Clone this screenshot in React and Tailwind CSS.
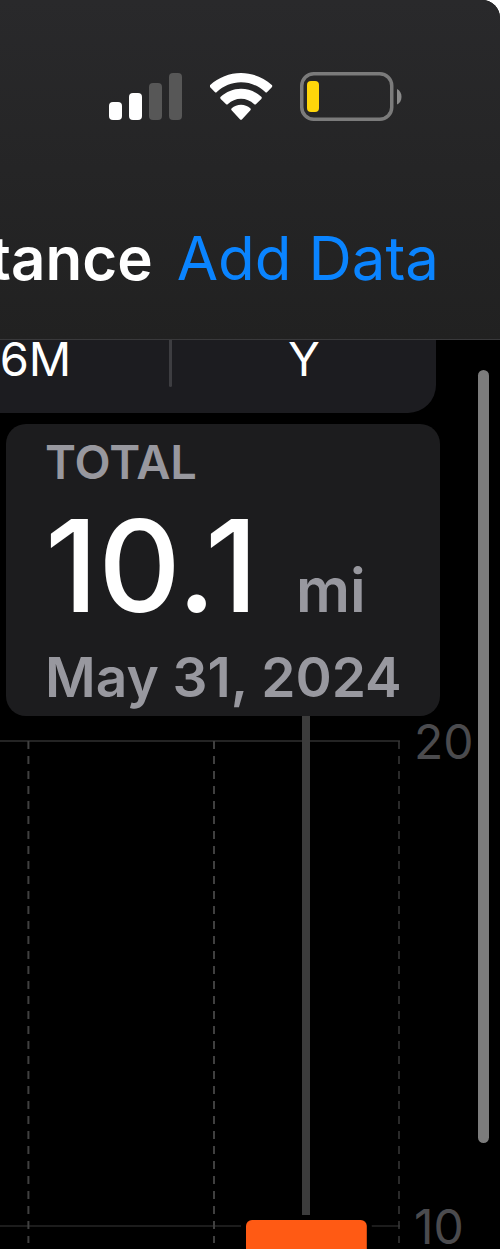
const ranges = ['6M', 'Y'];
const gridColumns = ['7.1%', '53.5%'];

const SignalIcon = () => (
  <svg width="74" height="48" viewBox="0 0 74 48" role="img" aria-label="Signal strength">
    <rect x="0" y="29" width="13" height="18" rx="4" fill="#fff" />
    <rect x="20" y="20" width="13" height="27" rx="4" fill="#fff" />
    <rect x="40" y="10" width="13" height="37" rx="4" fill="#575757" />
    <rect x="60" y="0" width="13" height="47" rx="4" fill="#575757" />
  </svg>
);

const WifiIcon = () => (
  <svg width="63" height="48" viewBox="0 0 63 48" fill="#fff" role="img" aria-label="Wi-Fi">
    <path d="M31 0C42.500 0 53.500 4.500 61.800 12q1 1 0 2.200l-4.600 4.700q-1 1-2 0C48.500 12.800 40 9.300 31 9.300S13.500 12.800 6.800 18.900q-1 1-2 0L.2 14.200q-1-1.200 0-2.200C8.500 4.500 19.500 0 31 0Z" />
    <path d="M31 15.800c7.700 0 14.800 3 20.300 8q1 1 0 2.100l-5.200 5.200q-1 1-2.100 0c-3.500-3.400-8-5.300-13-5.300s-9.500 1.900-13 5.300q-1.100 1-2.100 0l-5.200-5.200q-1-1.100 0-2.100c5.500-5 12.600-8 20.300-8Z" />
    <path d="M31 31.800c3.500 0 6.700 1.200 9.300 3.400q1.100 1 .1 2.100l-8.300 9q-1.100 1.100-2.200 0l-8.300-9q-1-1.100.1-2.100c2.600-2.200 5.800-3.400 9.300-3.400Z" />
  </svg>
);

const BatteryIcon = () => (
  <svg width="103" height="49" viewBox="0 0 103 49" role="img" aria-label="Battery low">
    <rect x="1.750" y="1.750" width="90" height="45.500" rx="12" fill="none" stroke="#7b7b7b" strokeWidth="3.500" />
    <rect x="7" y="9" width="12" height="31" rx="4" fill="#ffd60a" />
    <path d="M97 17c6 2.500 6 13 0 15.500Z" fill="#8a8a8a" />
  </svg>
);

const SummaryCard = () => (
  <section className="ml-[6px] mr-[60px] mt-[11px] rounded-[20px] bg-[#1c1c1e] pl-[39px] pr-4 pt-3 pb-[6px] font-semibold text-[#98989f]">
    <h2 className="text-[47px] leading-[52px]">TOTAL</h2>
    <p className="flex items-baseline gap-[38px] whitespace-nowrap">
      <span className="text-[128px] leading-[156px] font-medium text-white">10.1</span>
      <span className="text-[60px] leading-none">mi</span>
    </p>
    <p className="whitespace-nowrap text-[55px] leading-[66px]">May 31, 2024</p>
  </section>
);

const DistanceChart = () => (
  <section className="flex h-[533px]">
    <div className="min-w-0 flex-1">
      <svg width="100%" height="533" role="img" aria-label="Distance per day">
        <line x1="0" y1="25" x2="100%" y2="25" stroke="#242424" strokeWidth="2" />
        <line x1="0" y1="510" x2="100%" y2="510" stroke="#1c1c1c" strokeWidth="2" />
        {gridColumns.map((x) => (
          <line key={x} x1={x} y1="25" x2={x} y2="527" stroke="#404040" strokeWidth="2" strokeDasharray="8 7" />
        ))}
        <line x1="99.750%" y1="25" x2="99.750%" y2="527" stroke="#383838" strokeWidth="1.500" strokeDasharray="8 7" />
        {/* Selected day */}
        <line x1="76.500%" y1="0" x2="76.500%" y2="499" stroke="#3c3c3c" strokeWidth="8" />
        <rect x="61.500%" y="504" width="30.200%" height="60" rx="6" fill="#ff5a14" stroke="#000" strokeWidth="10" paintOrder="stroke" />
      </svg>
    </div>
    <div className="flex w-[100px] flex-col justify-between pl-[14px] pt-1 text-[48px] leading-[44px] text-[#4b4b4e]">
      <span>20</span>
      <span>10</span>
    </div>
  </section>
);

const App = () => {
  return (
    <div className="relative min-h-screen overflow-hidden rounded-tr-[18px] bg-black font-['Inter',sans-serif] text-white">
      <header className="border-b border-[#39393b] bg-linear-to-b from-[#29292b] to-[#212121]">
        <div className="flex items-center justify-end gap-[27px] pr-[97px] pt-[72px]">
          <SignalIcon />
          <WifiIcon />
          <BatteryIcon />
        </div>
        <nav className="flex items-center justify-end gap-6 whitespace-nowrap pb-[43px] pr-[61px] pt-[99px] text-[60px] leading-[76px]">
          <h1 className="font-semibold">tance</h1>
          <button type="button" className="text-[#0a84ff]">Add Data</button>
        </nav>
      </header>

      <main>
        <div className="-ml-[98px] mr-16 flex h-[73px] rounded-br-[28px] bg-[#1c1c20] text-[47px] leading-[38px]">
          {ranges.map((range, index) => (
            <div key={range} className="flex flex-1 items-start">
              {index > 0 && <span className="h-[47px] w-[3px] rounded-b bg-[#3d3d41]" />}
              <button type="button" className="flex-1">{range}</button>
            </div>
          ))}
        </div>
        <SummaryCard />
        <DistanceChart />
      </main>

      {/* Scroll indicator */}
      <div className="absolute right-[11px] top-[370px] h-[773px] w-[11px] rounded-full bg-[#7c7c7c]" />
    </div>
  );
};

export default App;
